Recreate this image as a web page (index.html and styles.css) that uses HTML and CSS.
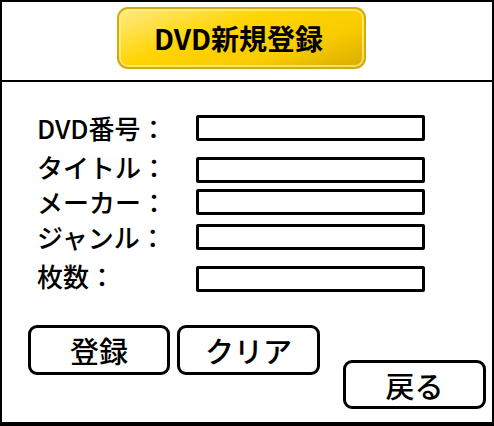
FILE: index.html
```html
<!DOCTYPE html>
<html lang="ja">
<head>
<meta charset="utf-8">
<title>DVD新規登録</title>
<link rel="stylesheet" href="styles.css">
</head>
<body>
<div class="frame">
  <header class="header">
    <button class="title-btn" type="button">DVD新規登録</button>
  </header>
  <main class="form">
    <div class="row row-first">
      <label class="label">DVD番号：</label>
      <input class="field" type="text">
    </div>
    <div class="row row-gap-l">
      <label class="label label-up">タイトル：</label>
      <input class="field" type="text">
    </div>
    <div class="row row-gap-s">
      <label class="label">メーカー：</label>
      <input class="field" type="text">
    </div>
    <div class="row row-gap-m">
      <label class="label">ジャンル：</label>
      <input class="field" type="text">
    </div>
    <div class="row row-gap-l">
      <label class="label label-up">枚数：</label>
      <input class="field" type="text">
    </div>
    <div class="actions">
      <button class="btn" type="button">登録</button>
      <button class="btn btn-clear" type="button">クリア</button>
      <button class="btn btn-back" type="button">戻る</button>
    </div>
  </main>
</div>
</body>
</html>
```

FILE: styles.css
```css
* { box-sizing: border-box; }
html, body { margin: 0; padding: 0; background: #fff; }
body {
  font-family: "Noto Sans CJK JP", "Liberation Sans", sans-serif;
  color: #000;
}
.frame {
  width: 494px;
  height: 426px;
  border: 2px solid #000;
  border-bottom-width: 4px;
  display: flex;
  flex-direction: column;
}
.header {
  height: 80px;
  border-bottom: 2px solid #000;
  padding: 5px 0 0 115px;
}
.title-btn {
  width: 249px;
  height: 62px;
  border-radius: 11px;
  border: 2px solid #d4ab0a;
  background: linear-gradient(160deg, #ffea86 0%, #ffd400 40%, #f9cc00 70%, #d9ad00 100%);
  box-shadow: inset 0 0 0 2px rgba(255, 236, 140, 0.75);
  font-family: "Noto Sans CJK JP", "Liberation Sans", sans-serif;
  font-weight: 700;
  font-size: 28px;
  color: #000;
  padding: 0 0 0 0;
  text-indent: -6px;
}
.form {
  padding: 33px 0 0 35px;
  display: flex;
  flex-direction: column;
}
.row {
  display: flex;
  align-items: center;
  height: 26px;
}
.row-gap-l { margin-top: 16px; }
.row-gap-s { margin-top: 6px; }
.row-gap-m { margin-top: 9px; }
.label {
  width: 159px;
  font-size: 26px;
  font-weight: 500;
  line-height: 26px;
  white-space: nowrap;
}
.label-up { position: relative; top: -3px; }
.field {
  width: 229px;
  height: 26px;
  border: 3px solid #000;
  border-radius: 2px;
  background: #fff;
  padding: 0;
}
.actions {
  display: flex;
  align-items: flex-start;
  margin-top: 33px;
  margin-left: -9px;
}
.btn {
  width: 142px;
  height: 50px;
  border: 3px solid #000;
  border-radius: 9px;
  background: #fff;
  font-family: "Noto Sans CJK JP", "Liberation Sans", sans-serif;
  font-weight: 500;
  font-size: 29px;
  color: #000;
  padding: 0;
}
.btn-clear { margin-left: 7px; width: 143px; }
.btn-back { margin-left: 23px; margin-top: 35px; width: 143px; height: 49px; }
```
